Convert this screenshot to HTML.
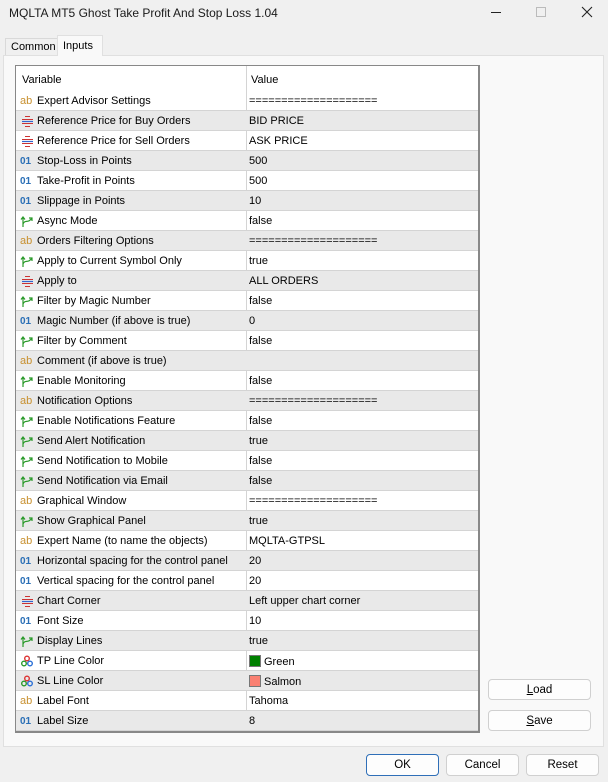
<!DOCTYPE html>
<html><head><meta charset="utf-8"><style>
*{margin:0;padding:0;box-sizing:border-box}
body{width:608px;height:782px;background:#f0f0f0;font-family:"Liberation Sans",Arial,sans-serif;font-size:11px;color:#000;position:relative;overflow:hidden}
.abs{position:absolute}
.title{left:9px;top:6px;font-size:12px;color:#1a1a1a}
.tab{border:1px solid #d9d9d9;border-bottom:none;font-size:11px;padding-left:5px}
.panel{left:3px;top:55px;width:601px;height:692px;background:#f9f9f9;border:1px solid #e0e0e0}
.tbl{left:15px;top:65px;width:465px;height:668px;background:#fff;border:1px solid #888;border-right:2px solid #888;border-bottom:2px solid #888;overflow:hidden}
.row{position:absolute;left:0;width:463px;height:20px;border-bottom:1px solid #d4d4d4}
.row.g{background:#e9e9e9}
.row .n{position:absolute;left:21px;top:4px;white-space:nowrap}
.row .v{position:absolute;left:233px;top:4px;white-space:nowrap}
.row .ic{position:absolute;left:4px;top:3px;width:14px;height:14px}
.div{position:absolute;left:230px;top:0;width:1px;height:668px;background:#d4d4d4}
.btn{position:absolute;background:#fdfdfd;border:1px solid #d0d0d0;border-radius:4px;text-align:center;font-size:11.5px;line-height:20px}
</style></head><body>
<div class="abs title">MQLTA MT5 Ghost Take Profit And Stop Loss 1.04</div>
<div class="abs" style="left:491px;top:12px;width:10px;height:1px;background:#222"></div>
<div class="abs" style="left:536px;top:7px;width:10px;height:10px;border:1px solid #bbb"></div>
<svg class="abs" style="left:581px;top:6px" width="12" height="12"><path d="M1 1L11 11M11 1L1 11" stroke="#222" stroke-width="1.1"/></svg>
<div class="abs tab" style="left:5px;top:38px;width:53px;height:18px;background:#f0f0f0;line-height:17px">Common</div>
<div class="abs panel"></div>
<div class="abs tab" style="left:57px;top:35px;width:46px;height:21px;background:#f9f9f9;line-height:20px;z-index:2;border-color:#e0e0e0">Inputs</div>
<div class="abs tbl">
<div class="div"></div>
<div class="abs" style="left:6px;top:8px">Variable</div>
<div class="abs" style="left:235px;top:8px">Value</div>
<div class="abs" style="left:462px;top:3px;width:1px;height:20px;background:#ddd"></div>
<div id="rows"></div>
</div>
<div class="btn" style="left:488px;top:679px;width:103px;height:21px"><u>L</u>oad</div>
<div class="btn" style="left:488px;top:710px;width:103px;height:21px"><u>S</u>ave</div>
<div class="btn" style="left:366px;top:754px;width:73px;height:22px;border:1px solid #2f6fb8">OK</div>
<div class="btn" style="left:446px;top:754px;width:73px;height:22px">Cancel</div>
<div class="btn" style="left:526px;top:754px;width:73px;height:22px">Reset</div>
<script>
var ic={
s:'<svg class="ic" viewBox="0 0 14 14"><text x="0" y="10" font-size="11" fill="#c8902f" font-family="Liberation Sans">ab</text></svg>',
e:'<svg class="ic" viewBox="0 0 14 14"><path d="M5 2.5h5M2 5.5h11M2 9.5h11M5 12.5h5" stroke="#c33" stroke-width="1"/><path d="M2 7.5h11" stroke="#36c" stroke-width="1.2"/></svg>',
i:'<svg class="ic" viewBox="0 0 14 14"><text x="0" y="10" font-size="10" fill="#2a6fb6" font-family="Liberation Sans" font-weight="bold">01</text></svg>',
b:'<svg class="ic" viewBox="0 0 14 14"><path d="M3 13V3M1 5.5l2-2.5 2 2.5M3 10C5 5 8 10 12 4M9 4h3v3" stroke="#2a9a2a" stroke-width="1.2" fill="none"/></svg>',
c:'<svg class="ic" viewBox="0 0 14 14"><circle cx="7" cy="4.5" r="2.3" fill="none" stroke="#d33" stroke-width="1.4"/><circle cx="4" cy="9.5" r="2.3" fill="none" stroke="#2a9a2a" stroke-width="1.4"/><circle cx="10" cy="9.5" r="2.3" fill="none" stroke="#2a6fd6" stroke-width="1.4"/></svg>'};
var d=[
['s','Expert Advisor Settings','===================='],
['e','Reference Price for Buy Orders','BID PRICE'],
['e','Reference Price for Sell Orders','ASK PRICE'],
['i','Stop-Loss in Points','500'],
['i','Take-Profit in Points','500'],
['i','Slippage in Points','10'],
['b','Async Mode','false'],
['s','Orders Filtering Options','===================='],
['b','Apply to Current Symbol Only','true'],
['e','Apply to','ALL ORDERS'],
['b','Filter by Magic Number','false'],
['i','Magic Number (if above is true)','0'],
['b','Filter by Comment','false'],
['s','Comment (if above is true)',''],
['b','Enable Monitoring','false'],
['s','Notification Options','===================='],
['b','Enable Notifications Feature','false'],
['b','Send Alert Notification','true'],
['b','Send Notification to Mobile','false'],
['b','Send Notification via Email','false'],
['s','Graphical Window','===================='],
['b','Show Graphical Panel','true'],
['s','Expert Name (to name the objects)','MQLTA-GTPSL'],
['i','Horizontal spacing for the control panel','20'],
['i','Vertical spacing for the control panel','20'],
['e','Chart Corner','Left upper chart corner'],
['i','Font Size','10'],
['b','Display Lines','true'],
['c','TP Line Color','<span style="display:inline-block;width:12px;height:12px;background:#008000;border:1px solid #777;vertical-align:-2px;margin-right:3px"></span>Green'],
['c','SL Line Color','<span style="display:inline-block;width:12px;height:12px;background:#fa8072;border:1px solid #777;vertical-align:-2px;margin-right:3px"></span>Salmon'],
['s','Label Font','Tahoma'],
['i','Label Size','8']];
var h='';
d.forEach(function(r,k){h+='<div class="row'+(k%2?' g':'')+'" style="top:'+(25+k*20)+'px">'+ic[r[0]]+'<span class="n">'+r[1]+'</span><span class="v">'+r[2]+'</span></div>';});
document.getElementById('rows').innerHTML=h;
</script>
</body></html>
